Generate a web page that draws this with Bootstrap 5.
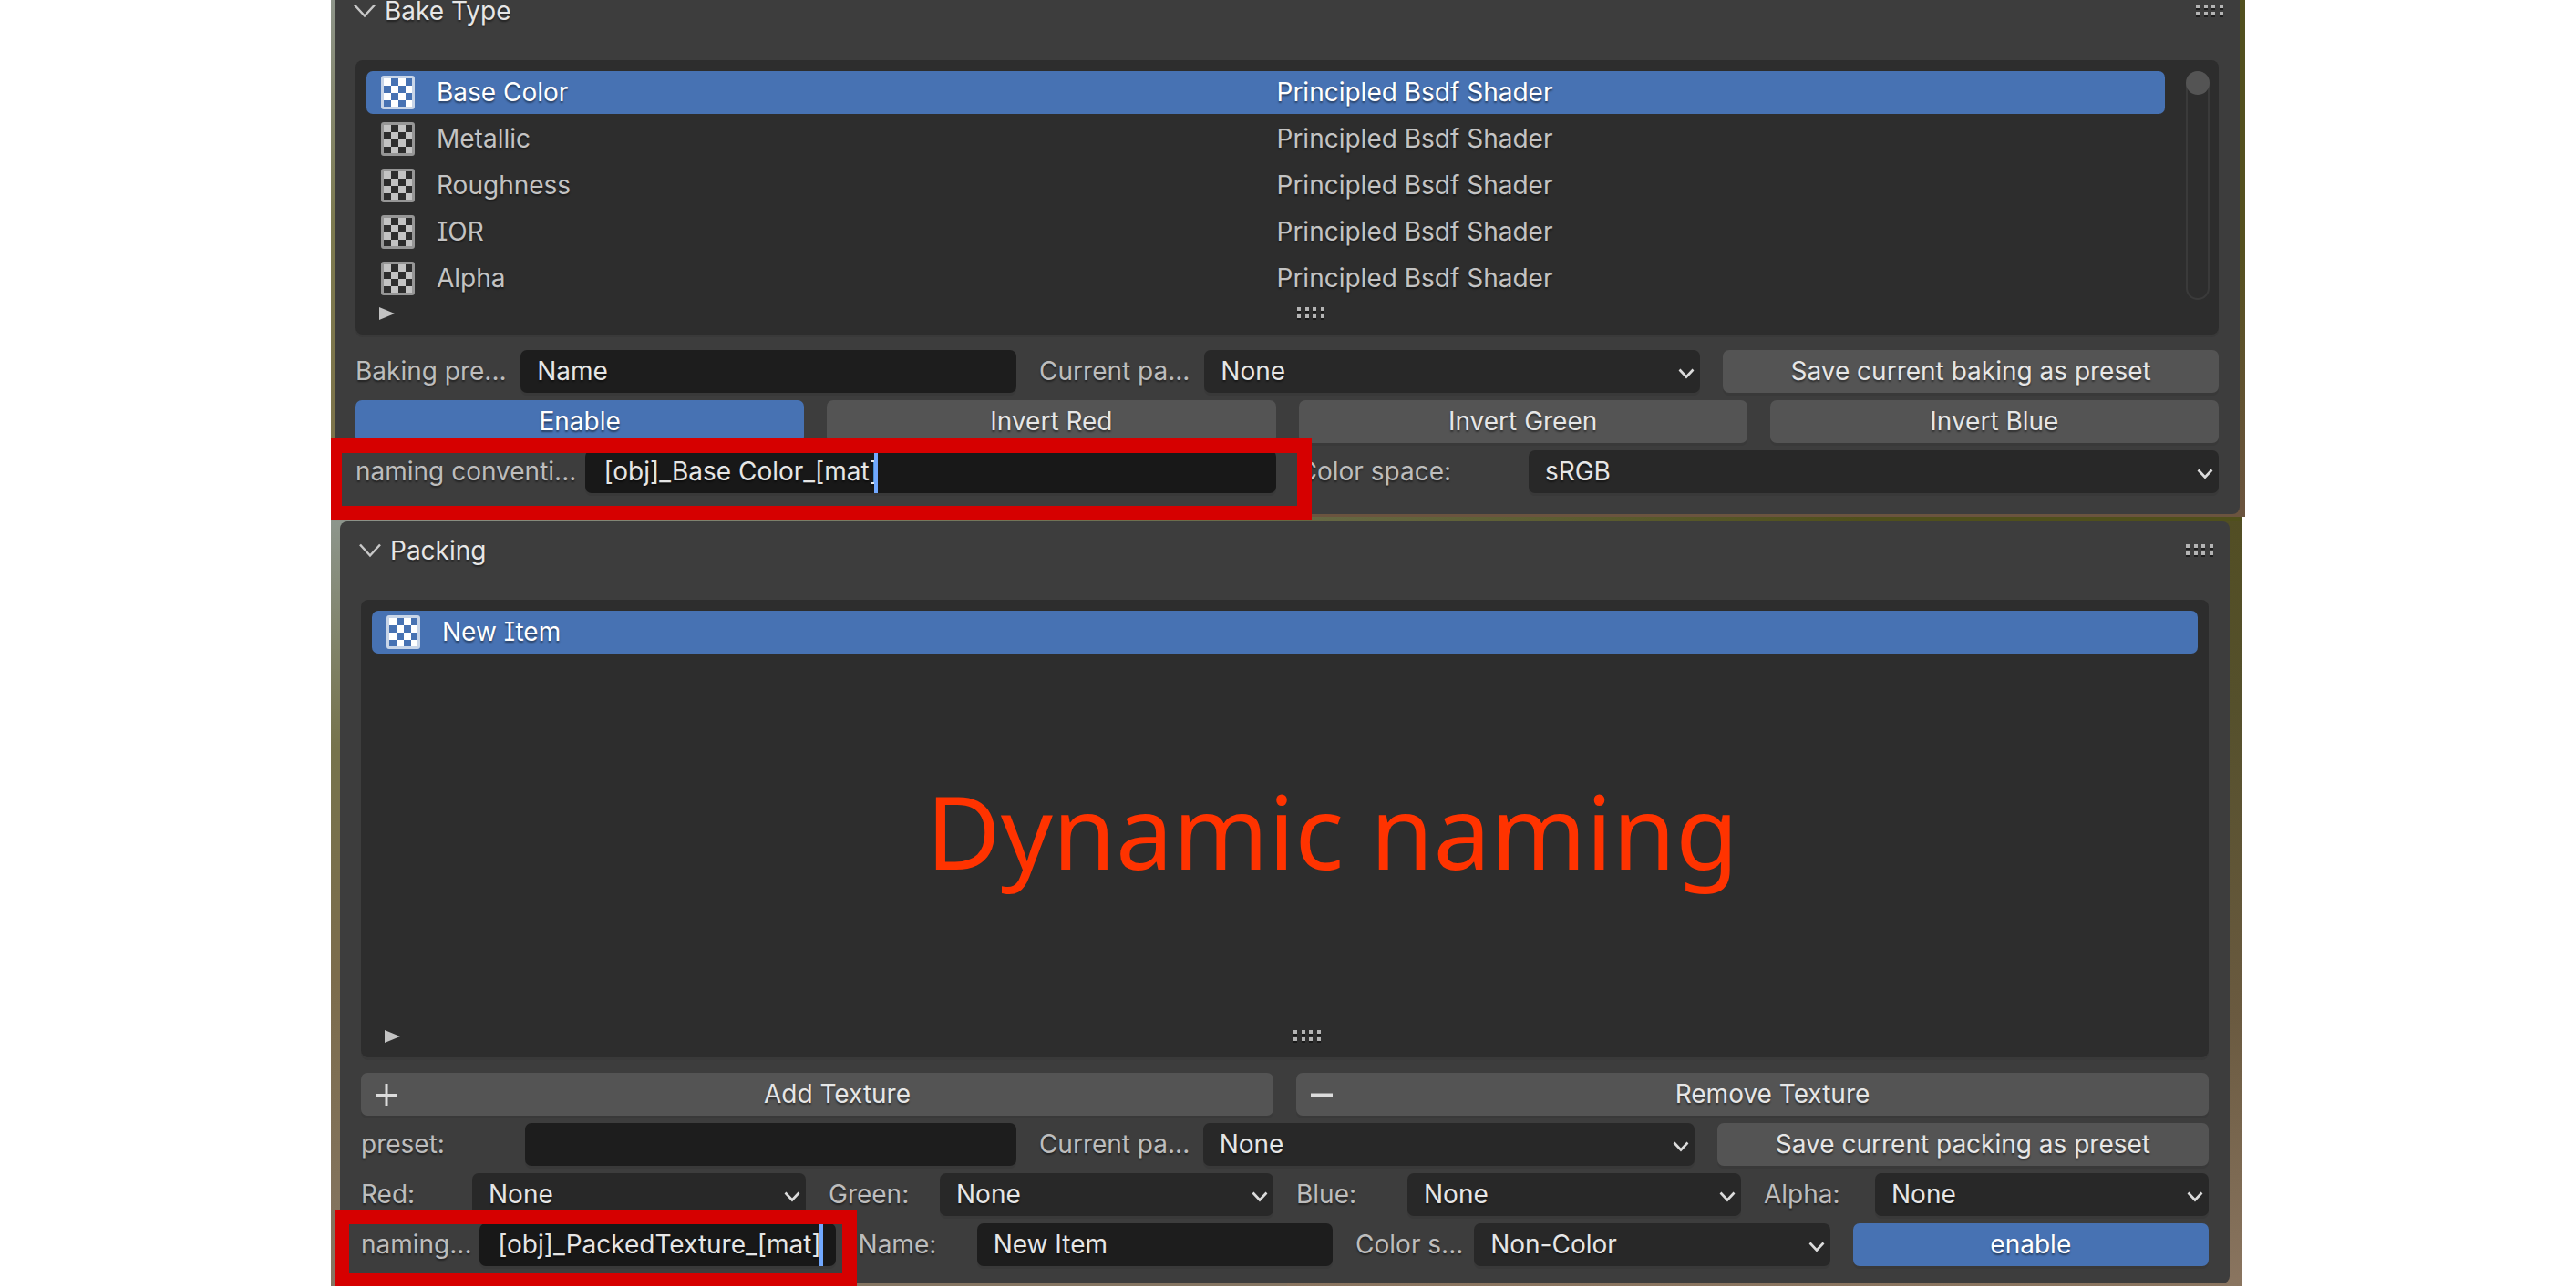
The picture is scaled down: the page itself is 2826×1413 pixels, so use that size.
<!DOCTYPE html>
<html lang="en">
<head>
<meta charset="utf-8">
<meta name="viewport" content="width=device-width, initial-scale=1">
<title>Dynamic naming</title>
<link href="https://cdn.jsdelivr.net/npm/bootstrap@5.3.0/dist/css/bootstrap.min.css" rel="stylesheet">
<style>
  :root { --ctl-h: 47px; --ctl-gap: 8px; --col-gap: 25px; }
  body {
    background: #fff; color: #e6e6e6;
    font-family: Inter, "Liberation Sans", sans-serif; font-size: 28px; line-height: 44px;
    font-feature-settings: "cv08" 1, "calt" 0;
    text-shadow: 0 2px 2px rgba(0, 0, 0, .45);
  }
  .stage { width: 100%; max-width: 2100px; }
  .backdrop-bake {
    margin-top: -20px; padding: 0 6px 3px 4px;
    background: linear-gradient(90deg, transparent 50%, #6b543f 50%) bottom / 100% 3px no-repeat,
      linear-gradient(#51501f, #55501f 50%, #6b543f) right / 50% 100% no-repeat,
      linear-gradient(#8f978f, #7c7a50 45%, #7c7048);
  }
  .backdrop-pack {
    margin-right: 3px; padding: 5px 14px 3px 10px;
    background: linear-gradient(90deg, #8d938a, #50501c 80%) top / 100% 5px no-repeat,
      linear-gradient(#524e24, #55502c 25%, #6a5a40 65%, #8a7560) right / 50% 100% no-repeat,
      linear-gradient(#8d968d, #76734c 30%, #7c6c4c 60%, #857562);
  }
  .panel { background: #3d3d3d; border-radius: 8px; padding: 8px 23px 19px; }
  .panel-bake { padding-bottom: 23px; border-top-right-radius: 0; }
  .panel-head { height: 48px; margin: 0 -5px 30px -2px; }
  .panel-title { font-size: 28px; line-height: 24px; font-weight: 400; margin: 0 0 0 10px; }
  .listbox { background: #2d2d2d; border-radius: 8px; padding: 12px 12px 16px; box-shadow: 0 3px 0 #393939; }
  .listbox-bake { padding-right: 10px; }
  .listbox-pack { min-height: 502px; }
  .item-stack { gap: 4px; }
  .item { height: var(--ctl-h); border-radius: 7px; color: #c3c3c3; padding-left: 16px; }
  .item.active { background: #4772b3; color: #fff; }
  .item-icon { margin-right: 24px; flex: none; }
  .item-half { width: 50%; }
  .item-name { margin-left: -16px; padding-left: 16px; }
  .item-shader { padding-left: 20px; }
  .item-text { padding-bottom: 1px; }
  .scroll-track { width: 26px; margin-left: 23px; border: 2px solid #3a3a3a; border-radius: 13px; }
  .scroll-thumb { width: 26px; height: 26px; margin: -2px; border-radius: 50%; background: #545454; }
  .list-foot { height: 14px; margin-top: 8px; padding-left: 14px; }
  .play { margin-right: 18px; }
  .controls { margin-top: 17px; display: grid; gap: var(--ctl-gap); }
  .line { display: grid; column-gap: var(--col-gap); }
  .line-2 { grid-template-columns: repeat(2, minmax(0, 1fr)); }
  .line-4 { grid-template-columns: repeat(4, minmax(0, 1fr)); }
  .line-443 { grid-template-columns: minmax(0, 4fr) minmax(0, 4fr) minmax(0, 3fr); }
  .line-4443 { grid-template-columns: repeat(3, minmax(0, 4fr)) minmax(0, 3fr); }
  .field { display: grid; grid-template-columns: minmax(0, 1fr) minmax(0, 3fr); align-items: center; }
  .field label { color: #bdbdbd; white-space: nowrap; padding-bottom: 2px; }
  .field .form-control, .field .form-select, .tool {
    height: var(--ctl-h); border: 0; border-radius: 7px; font-size: 28px; line-height: 44px;
    padding: 0 18px 2px; text-shadow: inherit; box-shadow: 0 3px 0 #393939;
  }
  .field .form-control { background: #1d1d1d; color: #e6e6e6; }
  .field .form-select {
    color: #e6e6e6; background-color: #282828;
    background-image: url("data:image/svg+xml,%3Csvg xmlns='http://www.w3.org/2000/svg' viewBox='0 0 18 12'%3E%3Cpath d='M1.5 1.5L9 9.5l7.500-8' fill='none' stroke='%23dcdcdc' stroke-width='2.600'/%3E%3C/svg%3E");
    background-position: right 6px top 20px; background-size: 18px 12px;
  }
  .field .editing { background: #181818; padding-left: 20px; padding-right: 4px; }
  .caret { position: absolute; top: 0; bottom: 0; width: 4px; background: #71a8ff; }
  .caret-bake { left: 317px; }
  .caret-pack { left: 373px; }
  .tool { background: #545454; color: #e6e6e6; }
  .tool:hover { background: #656565; color: #fff; }
  .tool.active { background: #4772b3; color: #fff; }
  .tool-with-icon { padding-left: 62px; }
  .tool-icon { position: absolute; left: 16px; top: 12px; }
  .callout { position: absolute; z-index: 2; border: 16px solid #d60000; pointer-events: none; }
  .callout-bake { inset: -13px -39px -30px -27px; border-left-width: 12px; }
  .callout-pack { inset: -15px -23px -24px -29px; }
  .caption { position: absolute; inset: 0; padding: 4px 0 0 104px; pointer-events: none;
    font-family: "Noto Sans", "Open Sans", sans-serif; font-size: 112px; line-height: 118px; color: #ff3300; text-shadow: none; white-space: nowrap; }
</style>
<script src="https://cdn.jsdelivr.net/npm/bootstrap@5.3.0/dist/js/bootstrap.bundle.min.js"></script>
</head>
<body>
<svg class="d-none" aria-hidden="true">
  <symbol id="i-checker" viewBox="0 0 37 37">
    <path fill="currentColor" opacity=".7" fill-rule="evenodd" d="M3 0h31a3 3 0 0 1 3 3v31a3 3 0 0 1-3 3H3a3 3 0 0 1-3-3V3a3 3 0 0 1 3-3zM3 3v31h31V3z"/>
    <path fill="currentColor" d="M3 3h8v8H3zM19 3h8v8h-8zM11 11h8v8h-8zM27 11h7v8h-7zM3 19h8v8H3zM19 19h8v8h-8zM11 27h8v7h-8zM27 27h7v7h-7z"/>
  </symbol>
  <symbol id="i-grip" viewBox="0 0 30 14">
    <path fill="#111" opacity=".7" d="M0 3h4v3H0zM9 3h4v3H9zM17 3h4v3h-4zM26 3h4v3h-4zM0 11h4v3H0zM9 11h4v3H9zM17 11h4v3h-4zM26 11h4v3h-4z"/>
    <path fill="#b4b4b4" d="M0 0h4v4H0zM9 0h4v4H9zM17 0h4v4h-4zM26 0h4v4h-4zM0 8h4v4H0zM9 8h4v4H9zM17 8h4v4h-4zM26 8h4v4h-4z"/>
  </symbol>
  <symbol id="i-open" viewBox="0 0 24 16"><path d="M1 1.500L12 13.500L23 1.500" fill="none" stroke="#c8c8c8" stroke-width="2.500"/></symbol>
  <symbol id="i-play" viewBox="0 0 17 14"><path d="M0 0L17 7L0 14z" fill="#c3c3c3"/></symbol>
</svg>

<main class="stage mx-auto d-flex flex-column">
  <div class="backdrop-bake">
    <section class="panel panel-bake">
      <header class="panel-head d-flex align-items-center">
        <svg width="24" height="16"><use href="#i-open"/></svg>
        <h2 class="panel-title">Bake Type</h2>
        <svg class="ms-auto" width="30" height="14"><use href="#i-grip"/></svg>
      </header>
      <div class="listbox listbox-bake">
        <div class="d-flex">
          <div class="item-stack d-flex flex-column flex-grow-1">
            <div class="item active d-flex align-items-center">
              <div class="item-half item-name d-flex align-items-center"><svg class="item-icon" width="37" height="37"><use href="#i-checker"/></svg><span class="item-text">Base Color</span></div>
              <div class="item-half item-text item-shader">Principled Bsdf Shader</div>
            </div>
            <div class="item d-flex align-items-center">
              <div class="item-half item-name d-flex align-items-center"><svg class="item-icon" width="37" height="37"><use href="#i-checker"/></svg><span class="item-text">Metallic</span></div>
              <div class="item-half item-text item-shader">Principled Bsdf Shader</div>
            </div>
            <div class="item d-flex align-items-center">
              <div class="item-half item-name d-flex align-items-center"><svg class="item-icon" width="37" height="37"><use href="#i-checker"/></svg><span class="item-text">Roughness</span></div>
              <div class="item-half item-text item-shader">Principled Bsdf Shader</div>
            </div>
            <div class="item d-flex align-items-center">
              <div class="item-half item-name d-flex align-items-center"><svg class="item-icon" width="37" height="37"><use href="#i-checker"/></svg><span class="item-text">IOR</span></div>
              <div class="item-half item-text item-shader">Principled Bsdf Shader</div>
            </div>
            <div class="item d-flex align-items-center">
              <div class="item-half item-name d-flex align-items-center"><svg class="item-icon" width="37" height="37"><use href="#i-checker"/></svg><span class="item-text">Alpha</span></div>
              <div class="item-half item-text item-shader">Principled Bsdf Shader</div>
            </div>
          </div>
          <div class="scroll-track"><div class="scroll-thumb"></div></div>
        </div>
        <div class="list-foot d-flex align-items-center">
          <svg class="play" width="17" height="14"><use href="#i-play"/></svg>
          <svg class="mx-auto" width="30" height="14"><use href="#i-grip"/></svg>
        </div>
      </div>
      <form class="controls">
        <div class="line line-443">
          <div class="field"><label for="bake-preset">Baking pre...</label><input class="form-control" id="bake-preset" type="text" value="Name"></div>
          <div class="field"><label for="bake-current">Current pa...</label><select class="form-select" id="bake-current"><option>None</option></select></div>
          <button class="btn tool" type="button">Save current baking as preset</button>
        </div>
        <div class="line line-4">
          <button class="btn tool active" type="button" aria-pressed="true">Enable</button>
          <button class="btn tool" type="button">Invert Red</button>
          <button class="btn tool" type="button">Invert Green</button>
          <button class="btn tool" type="button">Invert Blue</button>
        </div>
        <div class="line line-2">
          <div class="field position-relative">
            <label for="bake-naming">naming conventi...</label>
            <div class="position-relative"><input class="form-control editing" id="bake-naming" type="text" value="[obj]_Base Color_[mat]"><span class="caret caret-bake"></span></div>
            <div class="callout callout-bake"></div>
          </div>
          <div class="field"><label for="bake-space">Color space:</label><select class="form-select" id="bake-space"><option>sRGB</option></select></div>
        </div>
      </form>
    </section>
  </div>

  <div class="backdrop-pack">
    <section class="panel">
      <header class="panel-head d-flex align-items-center">
        <svg width="24" height="16"><use href="#i-open"/></svg>
        <h2 class="panel-title">Packing</h2>
        <svg class="ms-auto" width="30" height="14"><use href="#i-grip"/></svg>
      </header>
      <div class="listbox listbox-pack position-relative d-flex flex-column">
        <div class="item active d-flex align-items-center"><svg class="item-icon" width="37" height="37"><use href="#i-checker"/></svg><span class="item-text">New Item</span></div>
        <div class="list-foot d-flex align-items-center mt-auto">
          <svg class="play" width="17" height="14"><use href="#i-play"/></svg>
          <svg class="mx-auto" width="30" height="14"><use href="#i-grip"/></svg>
        </div>
        <div class="caption d-flex align-items-center justify-content-center">Dynamic naming</div>
      </div>
      <form class="controls">
        <div class="line line-2">
          <button class="btn tool tool-with-icon position-relative" type="button"><svg class="tool-icon" width="24" height="24" viewBox="0 0 24 24"><path d="M0 12.500h24M12 0v24" stroke="#dcdcdc" stroke-width="3"/></svg>Add Texture</button>
          <button class="btn tool tool-with-icon position-relative" type="button"><svg class="tool-icon" width="24" height="24" viewBox="0 0 24 24"><path d="M0 12.500h24" stroke="#dcdcdc" stroke-width="4"/></svg>Remove Texture</button>
        </div>
        <div class="line line-443">
          <div class="field"><label for="pack-preset">preset:</label><input class="form-control" id="pack-preset" type="text"></div>
          <div class="field"><label for="pack-current">Current pa...</label><select class="form-select" id="pack-current"><option>None</option></select></div>
          <button class="btn tool" type="button">Save current packing as preset</button>
        </div>
        <div class="line line-4">
          <div class="field"><label for="pack-red">Red:</label><select class="form-select" id="pack-red"><option>None</option></select></div>
          <div class="field"><label for="pack-green">Green:</label><select class="form-select" id="pack-green"><option>None</option></select></div>
          <div class="field"><label for="pack-blue">Blue:</label><select class="form-select" id="pack-blue"><option>None</option></select></div>
          <div class="field"><label for="pack-alpha">Alpha:</label><select class="form-select" id="pack-alpha"><option>None</option></select></div>
        </div>
        <div class="line line-4443">
          <div class="field position-relative">
            <label for="pack-naming">naming...</label>
            <div class="position-relative"><input class="form-control editing" id="pack-naming" type="text" value="[obj]_PackedTexture_[mat]"><span class="caret caret-pack"></span></div>
            <div class="callout callout-pack"></div>
          </div>
          <div class="field"><label for="pack-name">Name:</label><input class="form-control" id="pack-name" type="text" value="New Item"></div>
          <div class="field"><label for="pack-space">Color s...</label><select class="form-select" id="pack-space"><option>Non-Color</option></select></div>
          <button class="btn tool active" type="button" aria-pressed="true">enable</button>
        </div>
      </form>
    </section>
  </div>
</main>
</body>
</html>
